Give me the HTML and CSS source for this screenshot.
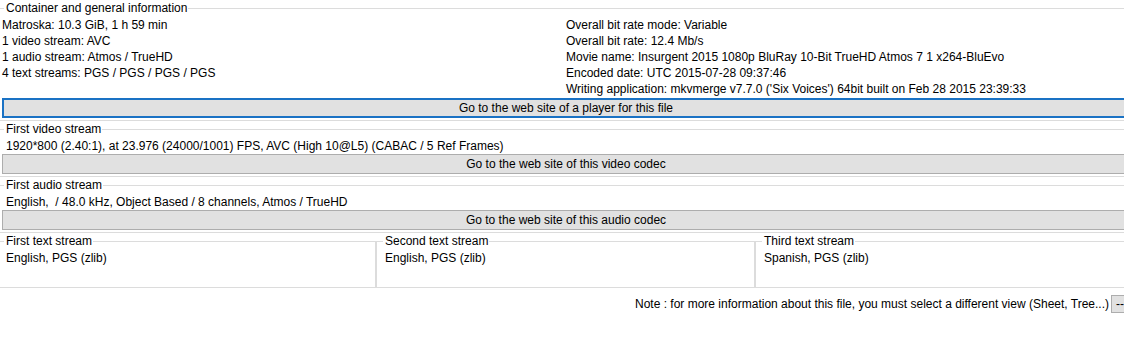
FILE: index.html
```html
<!DOCTYPE html>
<html lang="en">
<head>
    <meta charset="UTF-8">
    <title>MediaInfo - Basic view</title>
    <link rel="stylesheet" href="styles.css">
</head>
<body>
    <div class="view">
        <fieldset class="group general">
            <legend>Container and general information</legend>
            <div class="info-cols">
                <div class="info-col">
                    <div>Matroska: 10.3 GiB, 1 h 59 min</div>
                    <div>1 video stream: AVC</div>
                    <div>1 audio stream: Atmos / TrueHD</div>
                    <div>4 text streams: PGS / PGS / PGS / PGS</div>
                </div>
                <div class="info-col">
                    <div>Overall bit rate mode: Variable</div>
                    <div>Overall bit rate: 12.4 Mb/s</div>
                    <div>Movie name: Insurgent 2015 1080p BluRay 10-Bit TrueHD Atmos 7 1 x264-BluEvo</div>
                    <div>Encoded date: UTC 2015-07-28 09:37:46</div>
                    <div>Writing application: mkvmerge v7.7.0 ('Six Voices') 64bit built on Feb 28 2015 23:39:33</div>
                </div>
            </div>
            <button class="link-btn focused">Go to the web site of a player for this file</button>
        </fieldset>

        <fieldset class="group stream">
            <legend>First video stream</legend>
            <div class="stream-text">1920*800 (2.40:1), at 23.976 (24000/1001) FPS, AVC (High 10@L5) (CABAC / 5 Ref Frames)</div>
            <button class="link-btn">Go to the web site of this video codec</button>
        </fieldset>

        <fieldset class="group stream">
            <legend>First audio stream</legend>
            <div class="stream-text">English,  / 48.0 kHz, Object Based / 8 channels, Atmos / TrueHD</div>
            <button class="link-btn">Go to the web site of this audio codec</button>
        </fieldset>

        <div class="text-streams">
            <fieldset class="group text-group">
                <legend>First text stream</legend>
                <div class="stream-text text-body">English, PGS (zlib)</div>
            </fieldset>
            <fieldset class="group text-group">
                <legend>Second text stream</legend>
                <div class="stream-text text-body">English, PGS (zlib)</div>
            </fieldset>
            <fieldset class="group text-group">
                <legend>Third text stream</legend>
                <div class="stream-text text-body">Spanish, PGS (zlib)</div>
            </fieldset>
        </div>

        <div class="note-row">
            <span>Note : for more information about this file, you must select a different view (Sheet, Tree...)</span>
            <button class="more-btn">--</button>
        </div>
    </div>
</body>
</html>
```

FILE: styles.css
```css
body {
    margin: 0;
    overflow: hidden;
    background: #ffffff;
    color: #000000;
    font-family: "Liberation Sans", Arial, sans-serif;
    font-size: 12px;
    line-height: 16px;
}
.view {
    width: 1138px;
    margin-left: -3px;
}
.group {
    border: 1px solid #dcdcdc;
    margin: 0;
    padding: 0 4px 2px;
    min-width: 0;
}
.group legend {
    margin-left: 2px;
    padding: 0 1px 0 2px;
    line-height: 16px;
}
.info-cols {
    display: grid;
    grid-template-columns: 564px 1fr;
    padding-top: 1px;
}
.info-col div {
    white-space: nowrap;
}
.stream-text {
    padding: 1px 0 0 4px;
    white-space: pre;
}
.link-btn {
    display: block;
    box-sizing: border-box;
    width: 100%;
    height: 20px;
    margin-top: 0;
    padding: 0;
    border: 1px solid #adadad;
    background: #e1e1e1;
    color: #000000;
    font: inherit;
    line-height: 16px;
}
.general .link-btn {
    margin-top: 1px;
}
.link-btn.focused {
    border: 2px solid #1a72c4;
}
.text-streams {
    display: grid;
    grid-template-columns: repeat(3, 379px);
}
.text-group {
    padding-bottom: 0;
}
.text-body {
    height: 37px;
}
.note-row {
    display: flex;
    justify-content: flex-end;
    align-items: center;
    gap: 2px;
    margin-top: 7px;
}
.more-btn {
    box-sizing: border-box;
    width: 24px;
    height: 18px;
    padding: 0 0 0 4px;
    border: 1px solid #adadad;
    background: #e1e1e1;
    font: inherit;
    text-align: left;
    line-height: 14px;
}
```
